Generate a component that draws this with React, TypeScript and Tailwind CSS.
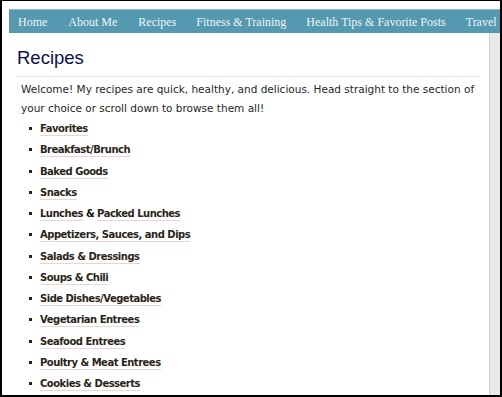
import React from 'react';

const navItems = ['Home', 'About Me', 'Recipes', 'Fitness & Training', 'Health Tips & Favorite Posts', 'Travel'];

// each entry is a list of link pieces joined by a plain "&"
const recipes: string[][] = [
  ['Favorites'],
  ['Breakfast/Brunch'],
  ['Baked Goods'],
  ['Snacks'],
  ['Lunches', 'Packed Lunches'],
  ['Appetizers, Sauces, and Dips'],
  ['Salads & Dressings'],
  ['Soups & Chili'],
  ['Side Dishes/Vegetables'],
  ['Vegetarian Entrees'],
  ['Seafood Entrees'],
  ['Poultry & Meat Entrees'],
  ['Cookies & Desserts'],
];

export default function App() {
  return (
    <div className="w-[502px] h-[397px] overflow-hidden bg-white border-t border-l-2 border-r-2 border-b-2 border-black flex flex-col">
      <div className="pt-[8px] pl-[7px]">
        <nav
          className="h-[24px] bg-[#5499b0] border-t border-[#8fc0d0] flex items-center pl-[9px] whitespace-nowrap text-[12px] text-[#eef5f7]"
          style={{ fontFamily: '"Liberation Serif", "DejaVu Serif", serif' }}
        >
          {navItems.map((item, i) => (
            <span key={item} className={i === 0 ? '' : i < 3 ? 'ml-[21px]' : 'ml-[20px]'}>
              {item}
            </span>
          ))}
        </nav>
      </div>

      <div className="flex flex-1 min-h-0">
        <div className="flex-1 pl-[15px] pr-[9px]">
          <h1
            className="mt-[14px] text-[18.5px] leading-[21px] text-[#10104a] pb-[8px] border-b border-[#e6e6e6]"
            style={{ fontFamily: '"Liberation Sans", Arial, sans-serif' }}
          >
            Recipes
          </h1>

          <div style={{ fontFamily: '"DejaVu Sans", Verdana, sans-serif' }}>
            <p className="mt-[3px] pl-[4px] text-[10.5px] leading-[19px] text-[#262626] whitespace-nowrap">
              Welcome! My recipes are quick, healthy, and delicious. Head straight to the section of
              <br />
              your choice or scroll down to browse them all!
            </p>

            <ul className="text-[10px] tracking-[-0.5px] leading-[21.25px] font-bold">
              {recipes.map((parts, i) => (
                <li key={i} className="flex items-center pl-[12px]">
                  <span className="w-[3px] h-[3px] bg-[#222] mr-[8px]" />
                  <span className="text-[#2a2418]">
                    {parts.map((p, j) => (
                      <React.Fragment key={j}>
                        {j > 0 && <span className="text-[#111]"> &amp; </span>}
                        <span className="border-b border-[#efd2d2] pb-[1px]">{p}</span>
                      </React.Fragment>
                    ))}
                  </span>
                </li>
              ))}
            </ul>
          </div>
        </div>

        <div className="w-[11px] bg-[#e9e9e9] border-l border-[#d4d4d4]" />
      </div>
    </div>
  );
}
